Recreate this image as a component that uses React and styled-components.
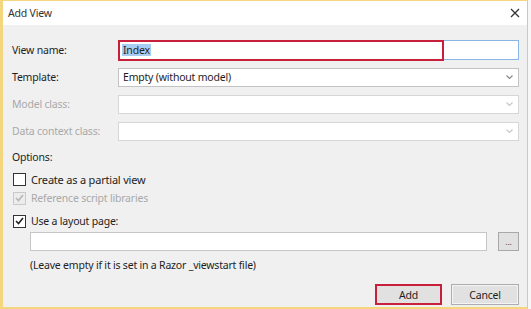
import React from 'react';
import styled, { createGlobalStyle } from 'styled-components';

const GlobalStyle = createGlobalStyle`
    html, body {
        margin: 0;
        padding: 0;
        background: #f7f7f7;
    }
    body {
        font-family: "Noto Sans", "Open Sans", sans-serif;
        font-size: 10.5px;
        letter-spacing: -0.2px;
        color: #1e1e1e;
    }
`;

const Window = styled.div`
    box-sizing: border-box;
    width: 528px;
    height: 309px;
    display: flex;
    flex-direction: column;
    border-left: 3px solid #f4d67e;
    border-top: 1px solid #f4d67e;
    border-bottom: 2px solid #f4d67e;
    border-right: 1px solid #c9c9c9;
    background: #f0f0f0;
`;

const TitleBar = styled.div`
    height: 24px;
    flex: none;
    display: flex;
    align-items: center;
    justify-content: space-between;
    padding: 0 7px 0 5px;
    background: #ffffff;
    color: #333;
    font-size: 10.5px;
`;

const CloseButton = styled.span`
    display: flex;
    align-items: center;
    color: #333;
`;

const Body = styled.div`
    flex: 1;
    display: flex;
    flex-direction: column;
    padding: 15px 8px 0 9px;
`;

const FormGrid = styled.div`
    display: grid;
    grid-template-columns: 106px 1fr;
    grid-auto-rows: 20px;
    row-gap: 7px;
    align-items: center;
`;

const Label = styled.label`
    color: ${(p) => (p.disabled ? '#a9a9a9' : '#1e1e1e')};
    white-space: nowrap;
`;

const TextInput = styled.div`
    position: relative;
    box-sizing: border-box;
    height: 20px;
    display: flex;
    align-items: center;
    padding-left: 3px;
    background: #fff;
    border: 1px solid ${(p) => (p.focused ? '#87b6e6' : '#c6c6c6')};
`;

const Highlight = styled.div`
    position: absolute;
    left: -1px;
    top: -1px;
    width: 326px;
    height: 21px;
    box-sizing: border-box;
    border: 2px solid #c8203a;
    pointer-events: none;
`;

const Selected = styled.span`
    background: #a9cdf2;
    color: #1e1e1e;
    padding: 0 1px;
    line-height: 12px;
`;

const Combo = styled.div`
    box-sizing: border-box;
    height: 19px;
    display: flex;
    align-items: center;
    justify-content: space-between;
    padding: 0 5px 0 4px;
    background: #fff;
    border: 1px solid ${(p) => (p.disabled ? '#d6d6d6' : '#c3c3c3')};
    color: #1e1e1e;
`;

const Chevron = ({ disabled }) => (
    <svg width="7" height="4" viewBox="0 0 7 4">
        <path d="M0.5 0.5 L3.5 3.5 L6.5 0.5" fill="none" stroke={disabled ? '#c8c8c8' : '#8a8a8a'} strokeWidth="1.2" />
    </svg>
);

const SectionLabel = styled.div`
    margin-top: 8px;
    line-height: 16px;
`;

const CheckRow = styled.div`
    display: flex;
    align-items: center;
    gap: 5px;
    height: 18px;
    margin-top: ${(p) => p.gap || 0}px;
    padding-left: 1px;
    color: ${(p) => (p.disabled ? '#a9a9a9' : '#1e1e1e')};
    font-size: ${(p) => (p.big ? '11px' : '10.5px')};
`;

const Box = styled.span`
    box-sizing: border-box;
    width: 13px;
    height: 13px;
    display: flex;
    align-items: center;
    justify-content: center;
    background: ${(p) => (p.disabled ? '#ececec' : '#fff')};
    border: 1px solid ${(p) => (p.disabled ? '#c9c9c9' : '#333')};
`;

const Tick = ({ color }) => (
    <svg width="9" height="8" viewBox="0 0 9 8">
        <path d="M1 4 L3.5 6.5 L8 1" fill="none" stroke={color} strokeWidth="1.6" />
    </svg>
);

function Check({ checked, disabled, children, gap, big }) {
    return (
        <CheckRow gap={gap} disabled={disabled} big={big}>
            <Box disabled={disabled}>{checked && <Tick color={disabled ? '#b5b5b5' : '#222'} />}</Box>
            <span>{children}</span>
        </CheckRow>
    );
}

const LayoutRow = styled.div`
    display: flex;
    align-items: center;
    gap: 11px;
    margin-top: 1px;
    padding-left: 18px;
    height: 20px;
`;

const PathInput = styled.div`
    flex: 1;
    box-sizing: border-box;
    height: 19px;
    background: #fff;
    border: 1px solid #c6c6c6;
`;

const BrowseButton = styled.div`
    box-sizing: border-box;
    width: 21px;
    height: 19px;
    display: flex;
    align-items: flex-end;
    justify-content: center;
    padding-bottom: 4px;
    background: #e1e1e1;
    border: 1px solid #a8a8a8;
    color: #555;
    font-size: 9px;
    line-height: 9px;
`;

const Hint = styled.div`
    margin-top: 7px;
    padding-left: 18px;
    line-height: 14px;
`;

const Footer = styled.div`
    display: flex;
    justify-content: flex-end;
    gap: 9px;
    margin-top: 12px;
`;

const Button = styled.div`
    box-sizing: border-box;
    width: ${(p) => p.width}px;
    height: 21px;
    display: flex;
    align-items: center;
    justify-content: center;
    background: #e1e1e1;
    border: ${(p) => (p.marked ? '2px solid #c8203a' : '1px solid #adadad')};
    box-shadow: ${(p) => (p.marked ? 'none' : 'inset 0 0 0 1px #f4f4f4')};
    color: #1e1e1e;
`;

function App() {
    return (
        <>
            <GlobalStyle />
            <Window>
                <TitleBar>
                    <span>Add View</span>
                    <CloseButton>
                        <svg width="10" height="10" viewBox="0 0 10 10">
                            <path d="M1 1 L9 9 M9 1 L1 9" stroke="#333" strokeWidth="1.3" />
                        </svg>
                    </CloseButton>
                </TitleBar>
                <Body>
                    <FormGrid>
                        <Label>View name:</Label>
                        <TextInput focused>
                            <Selected>Index</Selected>
                            <Highlight />
                        </TextInput>

                        <Label>Template:</Label>
                        <Combo>
                            <span>Empty (without model)</span>
                            <Chevron />
                        </Combo>

                        <Label disabled>Model class:</Label>
                        <Combo disabled>
                            <span />
                            <Chevron disabled />
                        </Combo>

                        <Label disabled>Data context class:</Label>
                        <Combo disabled>
                            <span />
                            <Chevron disabled />
                        </Combo>
                    </FormGrid>

                    <SectionLabel>Options:</SectionLabel>
                    <Check gap={5} big>Create as a partial view</Check>
                    <Check gap={1} checked disabled>Reference script libraries</Check>
                    <Check gap={5} checked>Use a layout page:</Check>

                    <LayoutRow>
                        <PathInput />
                        <BrowseButton>...</BrowseButton>
                    </LayoutRow>
                    <Hint>(Leave empty if it is set in a Razor _viewstart file)</Hint>

                    <Footer>
                        <Button width={67} marked>Add</Button>
                        <Button width={68}>Cancel</Button>
                    </Footer>
                </Body>
            </Window>
        </>
    );
}

export default App;
